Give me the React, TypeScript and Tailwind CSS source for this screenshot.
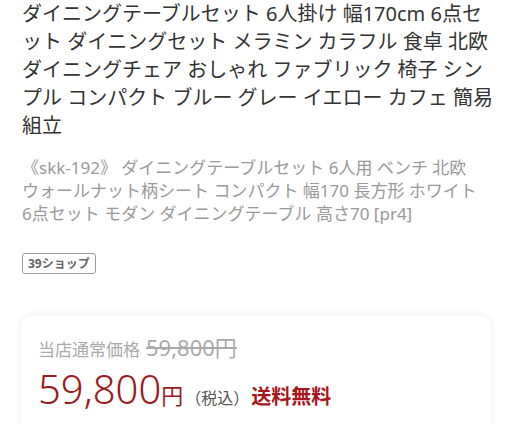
const jp = "font-['Noto_Sans','Noto_Sans_CJK_JP',sans-serif]";

export default function App() {
  return (
    <div className={`min-h-[423px] w-full overflow-hidden bg-white ${jp}`}>
      <div className="px-[22px]">
        <h1 className="whitespace-nowrap text-[20px] font-normal leading-[28px] text-[#333]">
          ダイニングテーブルセット 6人掛け 幅170cm 6点セ<br />
          ット ダイニングセット メラミン カラフル 食卓 北欧<br />
          ダイニングチェア おしゃれ ファブリック 椅子 シン<br />
          プル コンパクト ブルー グレー イエロー カフェ 簡易<br />
          組立
        </h1>
        <p className="mt-[16px] whitespace-nowrap text-[17px] leading-[23px] text-[#999]">
          《skk-192》 ダイニングテーブルセット 6人用 ベンチ 北欧<br />
          ウォールナット柄シート コンパクト 幅170 長方形 ホワイト<br />
          6点セット モダン ダイニングテーブル 高さ70 [pr4]
        </p>
        <div className="mt-[28px] flex">
          <span className="flex h-[21px] items-center rounded-[3px] border border-[#999] px-[5px] text-[12px] font-bold text-[#666]">
            39ショップ
          </span>
        </div>
      </div>
      <div className="mx-[21px] mt-[42px] rounded-[10px] bg-white px-[17px] pt-[18px] pb-4 shadow-[0_0_10px_rgba(0,0,0,0.08)]">
        <div className="flex items-baseline gap-[6px] leading-[26px] text-[#aaa]">
          <span className="text-[17px]">当店通常価格</span>
          <span className="text-[22px] line-through">59,800円</span>
        </div>
        <div className="mt-[5px] flex items-baseline">
          <span className="text-[40px] font-light leading-[42px] text-[#9b1b1f]">59,800</span>
          <span className="text-[22px] text-[#9b1b1f]">円</span>
          <span className="ml-[2px] text-[16px] text-[#555]">（税込）</span>
          <span className="ml-[2px] text-[20px] font-bold text-[#a8151d]">送料無料</span>
        </div>
      </div>
    </div>
  );
}
